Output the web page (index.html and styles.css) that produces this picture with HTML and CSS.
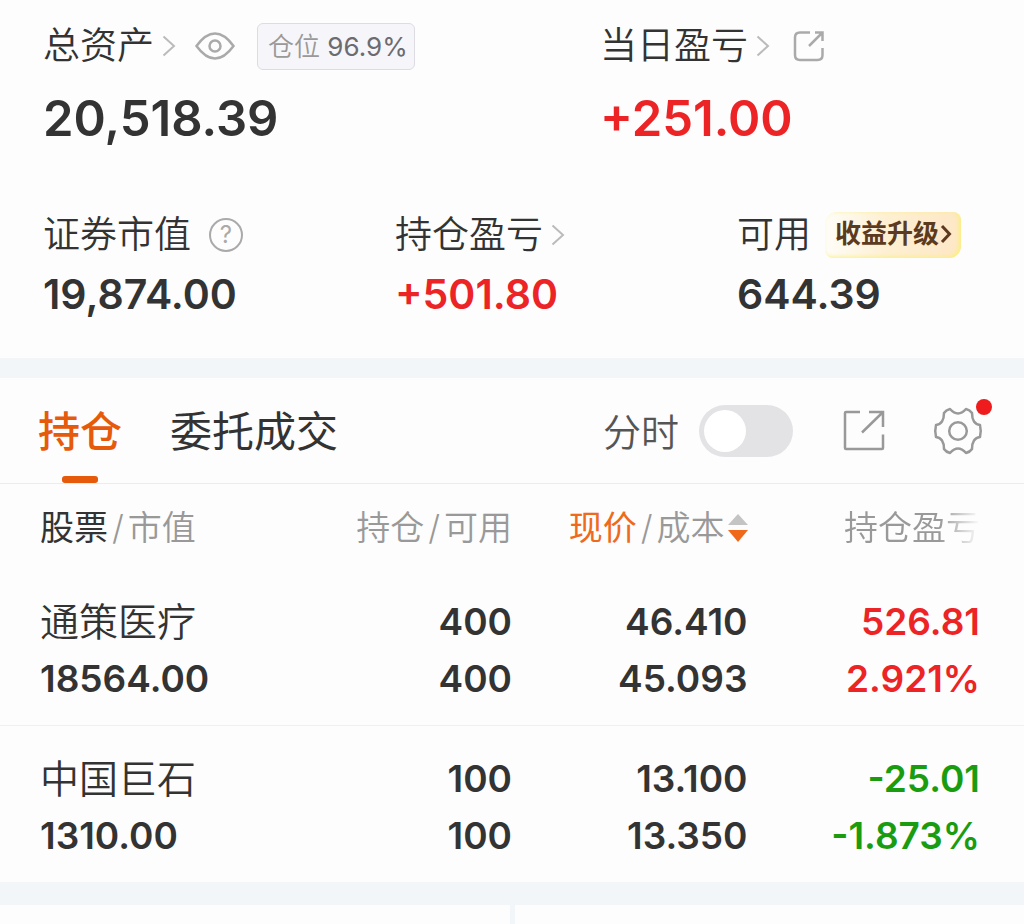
FILE: index.html
```html
<!DOCTYPE html>
<html lang="zh-CN">
<head>
    <meta charset="UTF-8">
    <meta name="viewport" content="width=device-width, initial-scale=1.0">
    <title>持仓</title>
    <link rel="stylesheet" href="styles.css">
</head>
<body>
    <section class="summary">
        <div class="summary-row two">
            <div class="stat">
                <div class="stat-label">
                    <a href="#" class="stat-link">总资产
                        <svg class="chevron" viewBox="0 0 14 22"><path d="M1.5 1.5 L12 11 L1.5 20.5"/></svg>
                    </a>
                    <button class="icon-btn eye" aria-label="隐藏金额">
                        <svg width="40" height="28" viewBox="0 0 40 28"><path d="M1.500 14 C8 5 14 1.500 20 1.500 C26 1.500 32 5 38.500 14 C32 23 26 26.500 20 26.500 C14 26.500 8 23 1.500 14 Z"/><circle cx="20" cy="14" r="5.500"/></svg>
                    </button>
                    <span class="position-tag">仓位 <b>96.9%</b></span>
                </div>
                <div class="stat-value large">20,518.39</div>
            </div>
            <div class="stat">
                <div class="stat-label">
                    <a href="#" class="stat-link">当日盈亏
                        <svg class="chevron" viewBox="0 0 14 22"><path d="M1.5 1.5 L12 11 L1.5 20.5"/></svg>
                    </a>
                    <button class="icon-btn share" aria-label="分享">
                        <svg width="32" height="32" viewBox="0 0 32 32"><path d="M17 2.500 H7 Q2 2.500 2 7.500 V25 Q2 30 7 30 H24.500 Q29.500 30 29.500 25 V18"/><path d="M16 16 L29.500 2.500 M22 2.500 H29.500 V11"/></svg>
                    </button>
                </div>
                <div class="stat-value large up">+251.00</div>
            </div>
        </div>
        <div class="summary-row three">
            <div class="stat">
                <div class="stat-label">
                    <span>证券市值</span>
                    <button class="icon-btn help" aria-label="说明">?</button>
                </div>
                <div class="stat-value">19,874.00</div>
            </div>
            <div class="stat">
                <div class="stat-label">
                    <a href="#" class="stat-link">持仓盈亏
                        <svg class="chevron" viewBox="0 0 14 22"><path d="M1.5 1.5 L12 11 L1.5 20.5"/></svg>
                    </a>
                </div>
                <div class="stat-value up">+501.80</div>
            </div>
            <div class="stat">
                <div class="stat-label">
                    <span>可用</span>
                    <a href="#" class="upgrade">收益升级<svg width="12" height="20" viewBox="0 0 12 20"><path d="M2 2 L9.500 10 L2 18"/></svg></a>
                </div>
                <div class="stat-value">644.39</div>
            </div>
        </div>
    </section>

    <section class="holdings">
        <div class="toolbar">
            <nav class="tabs">
                <button class="tab active">持仓</button>
                <button class="tab">委托成交</button>
            </nav>
            <div class="tools">
                <label class="switch-label" for="minute">分时</label>
                <input type="checkbox" class="switch" id="minute">
                <button class="icon-btn export" aria-label="导出">
                    <svg width="42" height="42" viewBox="0 0 42 42"><path d="M17 2 H3 Q2 2 2 3 V38 Q2 39 3 39 H39 Q40 39 40 38 V24.500"/><path d="M19 22.500 L39 3 M26 2 H40 V17"/></svg>
                </button>
                <button class="icon-btn settings" aria-label="设置">
                    <svg width="50" height="50" viewBox="0 0 50 50"><path d="M17 3 Q21 7.500 25 7.500 Q29 7.500 33 3 Q37 4 39 7 Q39 12.500 41 15.500 Q43 18.500 47 19 Q48.500 25 47 31 Q43 31.500 41 34.500 Q39 37.500 39 43 Q37 46 33 47 Q29 42.500 25 42.500 Q21 42.500 17 47 Q13 46 11 43 Q11 37.500 9 34.500 Q7 31.500 3 31 Q1.500 25 3 19 Q7 18.500 9 15.500 Q11 12.500 11 7 Q13 4 17 3 Z"/><circle cx="25" cy="25" r="8.800"/></svg>
                    <span class="dot"></span>
                </button>
            </div>
        </div>

        <table class="stocks">
            <thead>
                <tr>
                    <th><span class="dark">股票</span><i>/</i>市值</th>
                    <th>持仓<i>/</i>可用</th>
                    <th><span class="sorted">现价</span><i>/</i>成本<svg class="sort" width="20" height="28" viewBox="0 0 20 28"><path class="sort-up" d="M0 11 L10 0 L20 11 Z"/><path class="sort-down" d="M0 16 L20 16 L10 28 Z"/></svg></th>
                    <th><span class="fade">持仓盈亏</span></th>
                </tr>
            </thead>
            <tbody>
                <tr>
                    <td><div class="name">通策医疗</div><div>18564.00</div></td>
                    <td><div>400</div><div>400</div></td>
                    <td><div>46.410</div><div>45.093</div></td>
                    <td class="up"><div>526.81</div><div>2.921%</div></td>
                </tr>
                <tr>
                    <td><div class="name">中国巨石</div><div>1310.00</div></td>
                    <td><div>100</div><div>100</div></td>
                    <td><div>13.100</div><div>13.350</div></td>
                    <td class="down"><div>-25.01</div><div>-1.873%</div></td>
                </tr>
            </tbody>
        </table>
    </section>

    <section class="bottom">
        <div></div>
        <div></div>
    </section>
</body>
</html>
```
FILE: styles.css
```css
* {
    box-sizing: border-box;
}
body {
    margin: 0;
    min-height: 100vh;
    display: flex;
    flex-direction: column;
    background: #f3f6f9;
    color: #333;
    font-family: Inter, "Noto Sans CJK SC", sans-serif;
}
a {
    color: inherit;
    text-decoration: none;
}
button {
    border: 0;
    padding: 0;
    background: none;
    color: inherit;
    font-family: inherit;
}
svg {
    display: block;
    fill: none;
    stroke: currentColor;
}
.up {
    color: #ec2426;
}
.down {
    color: #1a9c11;
}

/* 资产概览 */
.summary {
    padding: 20px 0 40px 43px;
    margin-bottom: 20px;
    background: #fdfdfd;
}
.summary-row {
    display: grid;
}
.two {
    grid-template-columns: 557fr 424fr;
    margin-bottom: 60px;
}
.three {
    grid-template-columns: 352fr 342fr 287fr;
}
.stat-label {
    display: flex;
    align-items: center;
    height: 52px;
    font-size: 37px;
    font-weight: 350;
    line-height: 54px;
    white-space: nowrap;
}
.stat-link {
    display: flex;
    align-items: center;
    gap: 8px;
}
.chevron {
    width: 14px;
    height: 22px;
    color: #bbb;
    stroke-width: 2;
}
.stat-value {
    margin-top: 9px;
    font-size: 41px;
    line-height: 48px;
    font-weight: 600;
}
.stat-value.large {
    margin-top: 17px;
    font-size: 49px;
    line-height: 60px;
}
.icon-btn {
    flex: none;
    color: #aaa;
}
.eye {
    margin-left: 19px;
    stroke-width: 2.5;
}
.share {
    margin-left: 23px;
    stroke-width: 2.5;
}
.help {
    width: 34px;
    height: 34px;
    margin-left: 18px;
    border: 2px solid #aaa;
    border-radius: 50%;
    font-size: 24px;
    line-height: 30px;
}
.position-tag {
    margin-left: 22px;
    padding: 0 6px 0 10px;
    border: 1px solid #dcdce2;
    border-radius: 6px;
    background: #f6f6fa;
    color: #999;
    font-size: 26px;
    line-height: 45px;
}
.position-tag b {
    color: #6b6b70;
    font-weight: 400;
}
.upgrade {
    display: flex;
    align-items: center;
    gap: 1px;
    height: 46px;
    margin-left: 14px;
    padding: 0 9px 2px 10px;
    border-radius: 12px 8px 12px 8px;
    background: linear-gradient(90deg, #fefdf8, #fdf0d2 45%, #fde7c6);
    box-shadow: inset -2px -1px 4px #fbf07c;
    color: #5c3a20;
    font-size: 26px;
    font-weight: 700;
}
.upgrade svg {
    stroke-width: 3;
}

/* 持仓 */
.holdings {
    background: #fdfdfd;
}
.toolbar {
    display: flex;
    justify-content: space-between;
    height: 106px;
    padding: 0 41px 0 38px;
    border-bottom: 1px solid #ececec;
}
.tabs {
    display: flex;
    gap: 48px;
}
.tab {
    position: relative;
    padding-bottom: 4px;
    font-size: 42px;
}
.tab.active {
    color: #e65a0c;
    font-weight: 500;
}
.tab.active::after {
    content: "";
    position: absolute;
    left: 50%;
    bottom: 0;
    width: 36px;
    height: 7px;
    margin-left: -18px;
    border-radius: 3px;
    background: #e65a0c;
}
.tools {
    display: flex;
    align-items: center;
}
.switch-label {
    padding-bottom: 2px;
    color: #555;
    font-size: 38px;
    font-weight: 350;
}
.switch {
    appearance: none;
    width: 94px;
    height: 52px;
    margin: 0 0 0 20px;
    padding: 5px;
    border-radius: 26px;
    background: #e3e3e6;
}
.switch::before {
    content: "";
    display: block;
    width: 42px;
    height: 42px;
    border-radius: 50%;
    background: #fff;
}
.switch:checked {
    background: #e65a0c;
}
.switch:checked::before {
    margin-left: auto;
}
.export {
    margin-left: 50px;
    color: #999;
    stroke-width: 2.5;
}
.settings {
    position: relative;
    margin-left: 48px;
    color: #999;
    stroke-width: 2.5;
    stroke-linejoin: round;
}
.dot {
    position: absolute;
    top: -7px;
    right: -9px;
    width: 16px;
    height: 16px;
    border-radius: 50%;
    background: #ee1c1c;
}
.stocks {
    width: 100%;
    table-layout: fixed;
    border-collapse: collapse;
    text-align: right;
    white-space: nowrap;
}
.stocks th {
    width: 23%;
    height: 85px;
    padding: 0 0 2px;
    color: #999;
    font-size: 34px;
    font-weight: 350;
    text-align: right;
}
.stocks th:first-child,
.stocks th:last-child {
    width: 27%;
}
.stocks th:first-child,
.stocks td:first-child {
    padding-left: 40px;
    text-align: left;
}
.stocks th:last-child,
.stocks td:last-child {
    padding-right: 44px;
}
.stocks i {
    margin: 0 4px;
    font-style: normal;
}
.dark {
    color: #333;
    font-weight: 400;
}
.sorted {
    color: #ee6a1c;
    font-weight: 400;
}
.sort {
    display: inline-block;
    margin-left: 3px;
    vertical-align: -2px;
    stroke: none;
}
.sort-up {
    fill: #c4c4c4;
}
.sort-down {
    fill: #f0681a;
}
.fade {
    -webkit-mask-image: linear-gradient(90deg, #000 70%, transparent);
    mask-image: linear-gradient(90deg, #000 70%, transparent);
}
.stocks td {
    padding: 24px 0 18px;
    font-size: 37px;
    line-height: 57px;
    font-weight: 600;
}
.stocks td div {
    height: 57px;
}
.stocks tbody tr + tr {
    border-top: 1px solid #f0f0f2;
}
.stocks .name {
    font-size: 39px;
    font-weight: 350;
}

.bottom {
    flex: 1;
    display: grid;
    grid-template-columns: 1fr 1fr;
    gap: 5px;
    margin-top: 23px;
}
.bottom div {
    background: #fdfdfd;
}
```
